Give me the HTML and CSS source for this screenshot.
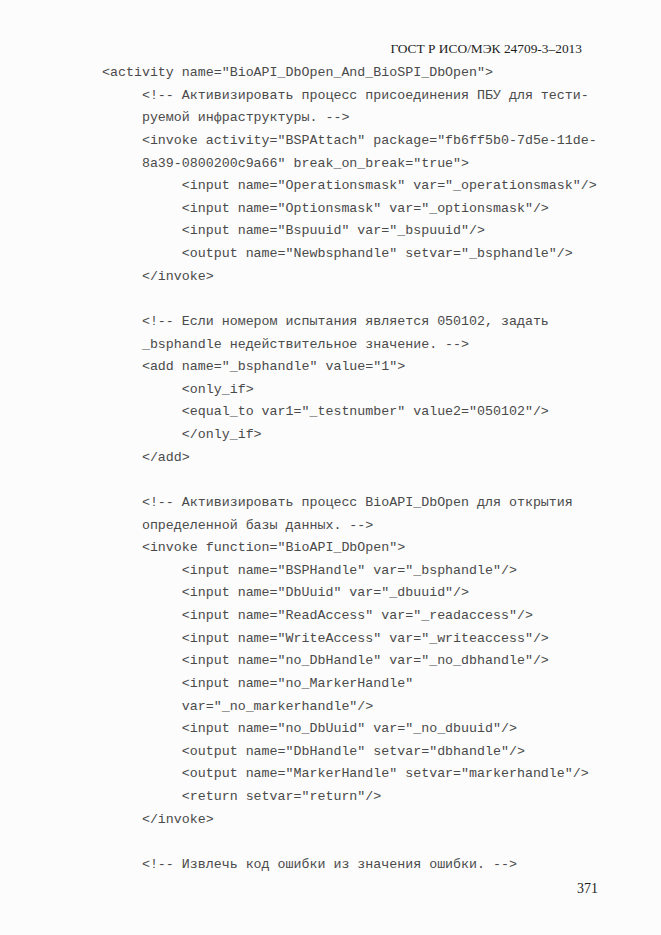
FILE: index.html
```html
<!DOCTYPE html>
<html lang="ru">
<head>
<meta charset="utf-8">
<title>ГОСТ Р ИСО/МЭК 24709-3–2013</title>
<link rel="stylesheet" href="styles.css">
</head>
<body>
<div class="page">
<header class="running-head">ГОСТ Р ИСО/МЭК 24709-3–2013</header>
<pre class="code">&lt;activity name="BioAPI_DbOpen_And_BioSPI_DbOpen"&gt;
     &lt;!-- Активизировать процесс присоединения ПБУ для тести-
     руемой инфраструктуры. --&gt;
     &lt;invoke activity="BSPAttach" package="fb6ff5b0-7d5e-11de-
     8a39-0800200c9a66" break_on_break="true"&gt;
          &lt;input name="Operationsmask" var="_operationsmask"/&gt;
          &lt;input name="Optionsmask" var="_optionsmask"/&gt;
          &lt;input name="Bspuuid" var="_bspuuid"/&gt;
          &lt;output name="Newbsphandle" setvar="_bsphandle"/&gt;
     &lt;/invoke&gt;

     &lt;!-- Если номером испытания является 050102, задать
     _bsphandle недействительное значение. --&gt;
     &lt;add name="_bsphandle" value="1"&gt;
          &lt;only_if&gt;
          &lt;equal_to var1="_testnumber" value2="050102"/&gt;
          &lt;/only_if&gt;
     &lt;/add&gt;

     &lt;!-- Активизировать процесс BioAPI_DbOpen для открытия
     определенной базы данных. --&gt;
     &lt;invoke function="BioAPI_DbOpen"&gt;
          &lt;input name="BSPHandle" var="_bsphandle"/&gt;
          &lt;input name="DbUuid" var="_dbuuid"/&gt;
          &lt;input name="ReadAccess" var="_readaccess"/&gt;
          &lt;input name="WriteAccess" var="_writeaccess"/&gt;
          &lt;input name="no_DbHandle" var="_no_dbhandle"/&gt;
          &lt;input name="no_MarkerHandle"
          var="_no_markerhandle"/&gt;
          &lt;input name="no_DbUuid" var="_no_dbuuid"/&gt;
          &lt;output name="DbHandle" setvar="dbhandle"/&gt;
          &lt;output name="MarkerHandle" setvar="markerhandle"/&gt;
          &lt;return setvar="return"/&gt;
     &lt;/invoke&gt;

     &lt;!-- Извлечь код ошибки из значения ошибки. --&gt;</pre>
<footer class="folio">371</footer>
</div>
</body>
</html>
```

FILE: styles.css
```css
html, body {
  margin: 0;
  padding: 0;
  background: #fcfcfc;
}

.page {
  width: 661px;
  height: 935px;
  box-sizing: border-box;
  padding: 40px 79px 0 102px;
  display: flex;
  flex-direction: column;
}

.running-head {
  align-self: flex-end;
  font-family: "Liberation Serif", "Times New Roman", serif;
  font-size: 13.4px;
  line-height: 17px;
  color: #1e1e1e;
}

.code {
  margin: 5px 0 0 0;
  font-family: "Liberation Mono", "Courier New", monospace;
  font-size: 13.3px;
  line-height: 22.63px;
  color: #4a4a4a;
  white-space: pre;
}

.folio {
  align-self: flex-end;
  margin-top: 3px;
  margin-right: -16px;
  font-family: "Liberation Serif", "Times New Roman", serif;
  font-size: 14px;
  line-height: 18px;
  color: #1e1e1e;
}
```
